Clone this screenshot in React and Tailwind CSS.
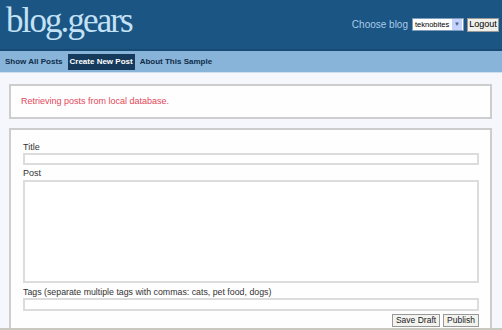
import React, { useState } from "react";

export default function App() {
    const [title, setTitle] = useState("");
    const [post, setPost] = useState("");
    const [tags, setTags] = useState("");

    return (
        <div className="w-[502px] h-[330px] overflow-hidden bg-[#f5f7fc] flex flex-col font-['Liberation_Sans',Arial,sans-serif]">
            {/* header */}
            <div className="h-[49px] bg-[#1b5584] flex justify-between items-start shrink-0">
                <h1 className="pl-[6px] pt-[1px] text-[35px] leading-[40px] tracking-[-1.9px] text-[#c4e2f6] font-['Liberation_Serif','Times_New_Roman',serif]">
                    blog.gears
                </h1>
                <div className="flex items-center pt-[17px] pr-[3px] gap-[3px]">
                    <span className="text-[10px] text-[#a9cbe9] mr-[1px]">Choose blog</span>
                    <div className="flex items-center h-[13px] w-[52px] bg-white border border-[#7f9db9]">
                        <span className="flex-1 text-[7.5px] leading-none pl-[2px] text-black">teknobites</span>
                        <span className="w-[10px] h-[11px] bg-[#c3d3fd] flex items-center justify-center text-[6px] text-[#4d6185] mr-[1px]">▼</span>
                    </div>
                    <button className="h-[14px] w-[32px] bg-[#f0f0ea] border border-[#999] text-[9px] leading-none text-black">Logout</button>
                </div>
            </div>
            <div className="h-[2px] bg-[#174a74] shrink-0" />
            {/* nav */}
            <div className="h-[21px] bg-[#88b4d9] flex items-center pl-[3px] gap-[3px] shrink-0">
                <span className="px-[2px] text-[8px] font-bold text-[#0f2c4a]">Show All Posts</span>
                <span className="h-[16px] flex items-center px-[2px] bg-[#163a5c] text-[8px] font-bold text-white">Create New Post</span>
                <span className="px-[2px] text-[8px] font-bold text-[#0f2c4a]">About This Sample</span>
            </div>
            <div className="h-[1px] bg-[#cfe0f0] shrink-0" />

            {/* status */}
            <div className="mt-[11px] ml-[9px] mr-[10px] h-[35px] border-2 border-[#cdcdcd] bg-[#fefefe] flex items-center pl-[10px] shrink-0">
                <span className="text-[9px] text-[#e2475a]">Retrieving posts from local database.</span>
            </div>

            {/* form */}
            <div className="mt-[9px] ml-[9px] mr-[10px] flex-1 border-2 border-b-0 border-[#cdcdcd] bg-[#fefefe] pl-[12px] pr-[11px] pt-[11px]">
                <label className="block text-[9px] leading-[12px] text-[#333]">Title</label>
                <input
                    value={title}
                    onChange={(e) => setTitle(e.target.value)}
                    className="block w-full h-[12px] border-2 border-[#dcdcdc] bg-white outline-none"
                />
                <label className="block mt-[2px] text-[9px] leading-[13px] text-[#333]">Post</label>
                <textarea
                    value={post}
                    onChange={(e) => setPost(e.target.value)}
                    className="block w-full h-[103px] border-2 border-[#dcdcdc] bg-white outline-none resize-none"
                />
                <label className="block mt-[3px] text-[8.8px] leading-[12px] text-[#333]">Tags (separate multiple tags with commas: cats, pet food, dogs)</label>
                <input
                    value={tags}
                    onChange={(e) => setTags(e.target.value)}
                    className="block w-full h-[13px] border-2 border-[#dcdcdc] bg-white outline-none"
                />
                <div className="flex justify-end gap-[3px] mt-[3px]">
                    <button className="h-[13px] px-[3px] border border-[#999] bg-[#f3f3ef] text-[8.5px] leading-none text-[#222]">Save Draft</button>
                    <button className="h-[13px] px-[3px] border border-[#999] bg-[#f3f3ef] text-[8.5px] leading-none text-[#222]">Publish</button>
                </div>
            </div>
            <div className="h-[2px] bg-[#c9c9c2] shrink-0" />
        </div>
    );
}
